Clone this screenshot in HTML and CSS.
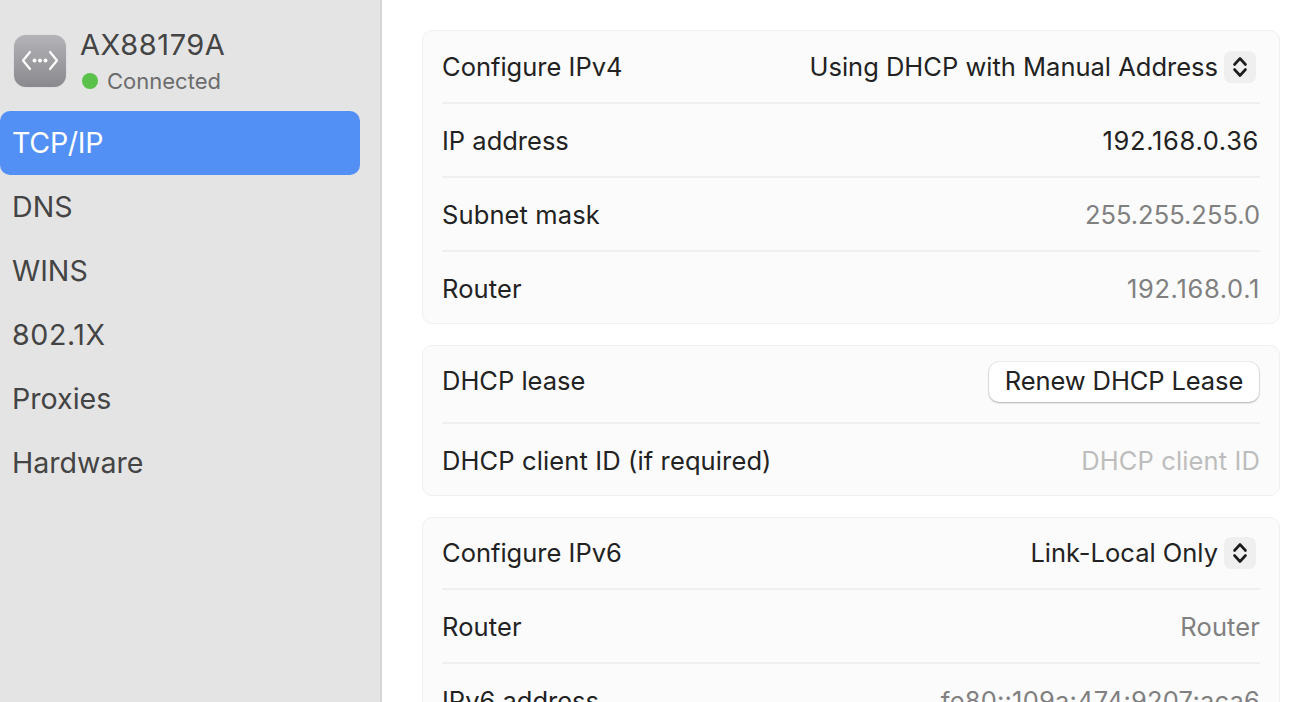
FILE: index.html
```html
<!DOCTYPE html>
<html lang="en">
<head>
<meta charset="utf-8">
<title>AX88179A</title>
<link rel="stylesheet" href="styles.css">
</head>
<body>
<div class="window">
  <aside class="sidebar">
    <div class="device">
      <div class="device-icon">
        <svg width="52" height="52" viewBox="0 0 52 52" fill="none">
          <path d="M16 17 L9 25.500 L16 34 M36 17 L43 25.500 L36 34" stroke="#fff" stroke-width="2.200" stroke-linecap="round" stroke-linejoin="round"/>
          <circle cx="20.500" cy="25.500" r="1.900" fill="#fff"/>
          <circle cx="26" cy="25.500" r="1.900" fill="#fff"/>
          <circle cx="31.500" cy="25.500" r="1.900" fill="#fff"/>
        </svg>
      </div>
      <div class="device-text">
        <div class="device-name">AX88179A</div>
        <div class="device-status"><span class="dot"></span>Connected</div>
      </div>
    </div>
    <nav class="nav">
      <div class="nav-item active">TCP/IP</div>
      <div class="nav-item">DNS</div>
      <div class="nav-item">WINS</div>
      <div class="nav-item num">802.1X</div>
      <div class="nav-item">Proxies</div>
      <div class="nav-item">Hardware</div>
    </nav>
  </aside>
  <main class="content">
    <section class="card">
      <div class="row h72"><span>Configure IPv4</span><span class="select">Using DHCP with Manual Address<span class="stepper"><svg width="16" height="24" viewBox="0 0 16 24" fill="none"><path d="M2.500 9.500 L8 3.500 L13.500 9.500 M2.500 14.500 L8 20.500 L13.500 14.500" stroke="#1c1c1c" stroke-width="2.600" stroke-linecap="round" stroke-linejoin="round"/></svg></span></span></div>
      <div class="row h73"><span>IP address</span><span class="strong ip">192.168.0.36</span></div>
      <div class="row h73"><span class="sp">Subnet mask</span><span class="muted">255.255.255.0</span></div>
      <div class="row h71 shift last"><span class="sp">Router</span><span class="muted ip">192.168.0.1</span></div>
    </section>
    <section class="card">
      <div class="row h77"><span>DHCP lease</span><button class="btn">Renew DHCP Lease</button></div>
      <div class="row h71 shift last"><span class="sp">DHCP client ID (if required)</span><span class="placeholder sp">DHCP client ID</span></div>
    </section>
    <section class="card">
      <div class="row h72b"><span>Configure IPv6</span><span class="select">Link-Local Only<span class="stepper"><svg width="16" height="24" viewBox="0 0 16 24" fill="none"><path d="M2.500 9.500 L8 3.500 L13.500 9.500 M2.500 14.500 L8 20.500 L13.500 14.500" stroke="#1c1c1c" stroke-width="2.600" stroke-linecap="round" stroke-linejoin="round"/></svg></span></span></div>
      <div class="row h73"><span class="sp">Router</span><span class="muted sp">Router</span></div>
      <div class="row h73"><span>IPv6 address</span><span class="muted v6">fe80::109a:474:9207:aca6</span></div>
    </section>
  </main>
</div>
</body>
</html>
```
FILE: styles.css
```css
* { box-sizing: border-box; }
html, body { margin: 0; height: 100%; overflow: hidden; background: #fff; }
body { font-family: Inter, "Liberation Sans", sans-serif; color: #222; }
.window { display: flex; width: 1290px; height: 702px; overflow: hidden; }
.sidebar {
  width: 382px; flex: none; background: #e4e4e4;
  border-right: 2px solid #d6d6d6;
  padding-top: 25px;
}
.device { display: flex; height: 86px; padding-left: 14px; }
.device-icon {
  width: 52px; height: 52px; margin-top: 10px; border-radius: 12px;
  background: linear-gradient(#b4b4b8, #8a8a8e);
  box-shadow: 0 0 1px rgba(0,0,0,.25);
}
.device-icon svg { display: block; }
.device-text { margin-left: 14px; }
.device-name { font-size: 29px; line-height: 40px; color: #444; letter-spacing: .55px; }
.device-status { display: flex; align-items: center; font-size: 22px; line-height: 32px; color: #6c6c6c; }
.dot { width: 16px; height: 16px; border-radius: 50%; background: #5ac24a; margin: 0 9px 0 2px; }
.nav { width: 360px; }
.nav-item {
  height: 64px; display: flex; align-items: center; padding: 0 0 2px 12px;
  font-size: 28.600px; color: #444; border-radius: 0 10px 10px 0;
}
.nav-item.num { letter-spacing: .6px; }
.nav-item.active { background: #5390f5; color: #fff; border-radius: 10px; letter-spacing: -.3px; }
.content { flex: 1; padding: 30px 10px 0 40px; display: flex; flex-direction: column; gap: 21px; min-width: 0; }
.card { flex: none; background: #fbfbfb; border: 1px solid #f0f0f0; border-radius: 10px; padding: 0 19px; }
.row {
  display: flex; align-items: center; justify-content: space-between;
  font-size: 25.500px; color: #222; border-bottom: 2px solid #efefef;
  white-space: nowrap;
}
.row.last { border-bottom: 0; }
.row.shift { padding-top: 2px; }
.h71 { height: 71px; }
.h72 { height: 73px; }
.h72b { height: 72px; padding-bottom: 1px; }
.h73 { height: 74px; }
.h77 { height: 78px; padding-bottom: 7px; }
.sp { letter-spacing: .12px; }
.strong { color: #222; padding-right: 1px; }
.muted { color: #808080; }
.ip { letter-spacing: .65px; }
.v6 { letter-spacing: .2px; }
.placeholder { color: #bdbdbd; }
.select { display: flex; align-items: center; }
.stepper {
  width: 32px; height: 32px; margin: 0 4px 0 6px; border-radius: 7px; background: #efefef;
  display: flex; align-items: center; justify-content: center;
}
.btn {
  width: 270px; height: 40px; margin: 2px 1px 0 0; padding: 0 0 2px; font: inherit; letter-spacing: -.1px; color: #222;
  background: #fff; border: 0; border-radius: 10px;
  box-shadow: 0 0 0 1px rgba(0,0,0,.06), 0 1px 2px rgba(0,0,0,.25);
}
```
